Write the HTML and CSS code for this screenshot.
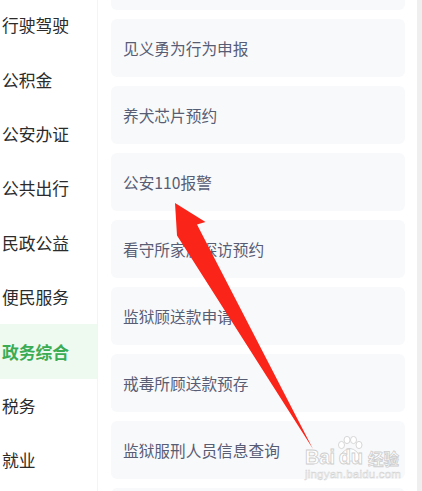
FILE: index.html
```html
<!DOCTYPE html>
<html lang="zh-CN">
<head>
  <meta charset="UTF-8" />
  <meta name="viewport" content="width=device-width, initial-scale=1.0" />
  <title>政务综合</title>
  <link rel="stylesheet" href="styles.css">
</head>
<body>
  <div class="page">
    <nav class="side">
      <div class="side-item">行驶驾驶</div>
      <div class="side-item">公积金</div>
      <div class="side-item">公安办证</div>
      <div class="side-item">公共出行</div>
      <div class="side-item">民政公益</div>
      <div class="side-item">便民服务</div>
      <div class="side-item active">政务综合</div>
      <div class="side-item">税务</div>
      <div class="side-item">就业</div>
    </nav>

    <main class="content">
      <ul class="service-list">
        <li class="service"></li>
        <li class="service">见义勇为行为申报</li>
        <li class="service">养犬芯片预约</li>
        <li class="service">公安110报警</li>
        <li class="service">看守所家属探访预约</li>
        <li class="service">监狱顾送款申请</li>
        <li class="service">戒毒所顾送款预存</li>
        <li class="service">监狱服刑人员信息查询</li>
        <li class="service"></li>
      </ul>
    </main>

    <div class="scroll-track"></div>

    <!-- annotation arrow drawn over the list -->
    <svg class="arrow" width="422" height="491" viewBox="0 0 422 491">
      <polygon points="175,203 205.5,222 197,224.5 313,449 177,235.5" fill="#fb2419" />
    </svg>

    <div class="watermark">
      <div class="wm-logo">
        <span class="wm-bai">Bai</span>
        <span class="wm-du">
          <svg class="wm-paw" width="26" height="26" viewBox="0 0 26 26">
            <ellipse cx="4.5" cy="9" rx="3" ry="3.6" />
            <ellipse cx="10" cy="4" rx="3" ry="3.6" />
            <ellipse cx="16.5" cy="4" rx="3" ry="3.6" />
            <ellipse cx="22" cy="9" rx="3" ry="3.6" />
            <path d="M6 16 Q13 9 20 16 Q25 22 20 25 L6 25 Q1 22 6 16 Z" />
          </svg>
          <span class="wm-du-text">du</span>
        </span>
        <span class="wm-jy">经验</span>
      </div>
      <div class="wm-url">jingyan.baidu.com</div>
    </div>
  </div>
</body>
</html>
```

FILE: styles.css
```css
body {
  margin: 0;
  padding: 0;
  background-color: #ffffff;
  font-family: "Noto Sans CJK SC", "Noto Sans", sans-serif;
}
.page {
  position: relative;
  display: flex;
  width: 422px;
  height: 491px;
  overflow: hidden;
  background: #fff;
}
.side {
  width: 97px;
  flex-shrink: 0;
  border-right: 1px solid #f4f4f4;
  margin-top: -2px;
}
.side-item {
  height: 54.4px;
  display: flex;
  align-items: center;
  padding-left: 2px;
  font-size: 16.8px;
  color: #2b2b2b;
  white-space: nowrap;
}
.side-item.active {
  background-color: #eef9f0;
  color: #3aac54;
  font-weight: 700;
}
.content {
  flex: 1;
  padding: 0 12px 0 13px;
}
.service-list {
  list-style: none;
  margin: -48px 0 0;
  padding: 0;
  display: flex;
  flex-direction: column;
  gap: 9px;
}
.service {
  height: 58px;
  flex-shrink: 0;
  display: flex;
  align-items: center;
  padding-left: 12px;
  background-color: #f8f9fb;
  border-radius: 6px;
  font-size: 15.7px;
  color: #585d74;
}
.scroll-track {
  width: 5px;
  flex-shrink: 0;
  background-color: #efefef;
}
.arrow {
  position: absolute;
  left: 0;
  top: 0;
}
.watermark {
  position: absolute;
  left: 305px;
  top: 440px;
  color: #ffffff;
  -webkit-text-stroke: 0.8px #cdcdcd;
}
.wm-logo {
  display: flex;
  align-items: flex-end;
  height: 27px;
}
.wm-bai, .wm-du-text {
  font-family: "Liberation Sans", sans-serif;
  font-weight: 700;
  font-size: 20px;
  line-height: 19px;
}
.wm-bai {
  letter-spacing: -0.5px;
}
.wm-du {
  position: relative;
  display: flex;
  margin-left: 4px;
}
.wm-du-text {
  position: relative;
}
.wm-paw {
  position: absolute;
  left: -2px;
  top: -12px;
  fill: #ffffff;
  stroke: #cdcdcd;
  stroke-width: 0.8;
}
.wm-jy {
  margin-left: 5px;
  font-size: 15.5px;
  line-height: 18px;
  font-weight: 700;
}
.wm-url {
  font-family: "Liberation Sans", sans-serif;
  font-size: 11.5px;
  margin-top: 1px;
  letter-spacing: 0.2px;
  -webkit-text-stroke: 0.5px #d2d2d2;
}
```
